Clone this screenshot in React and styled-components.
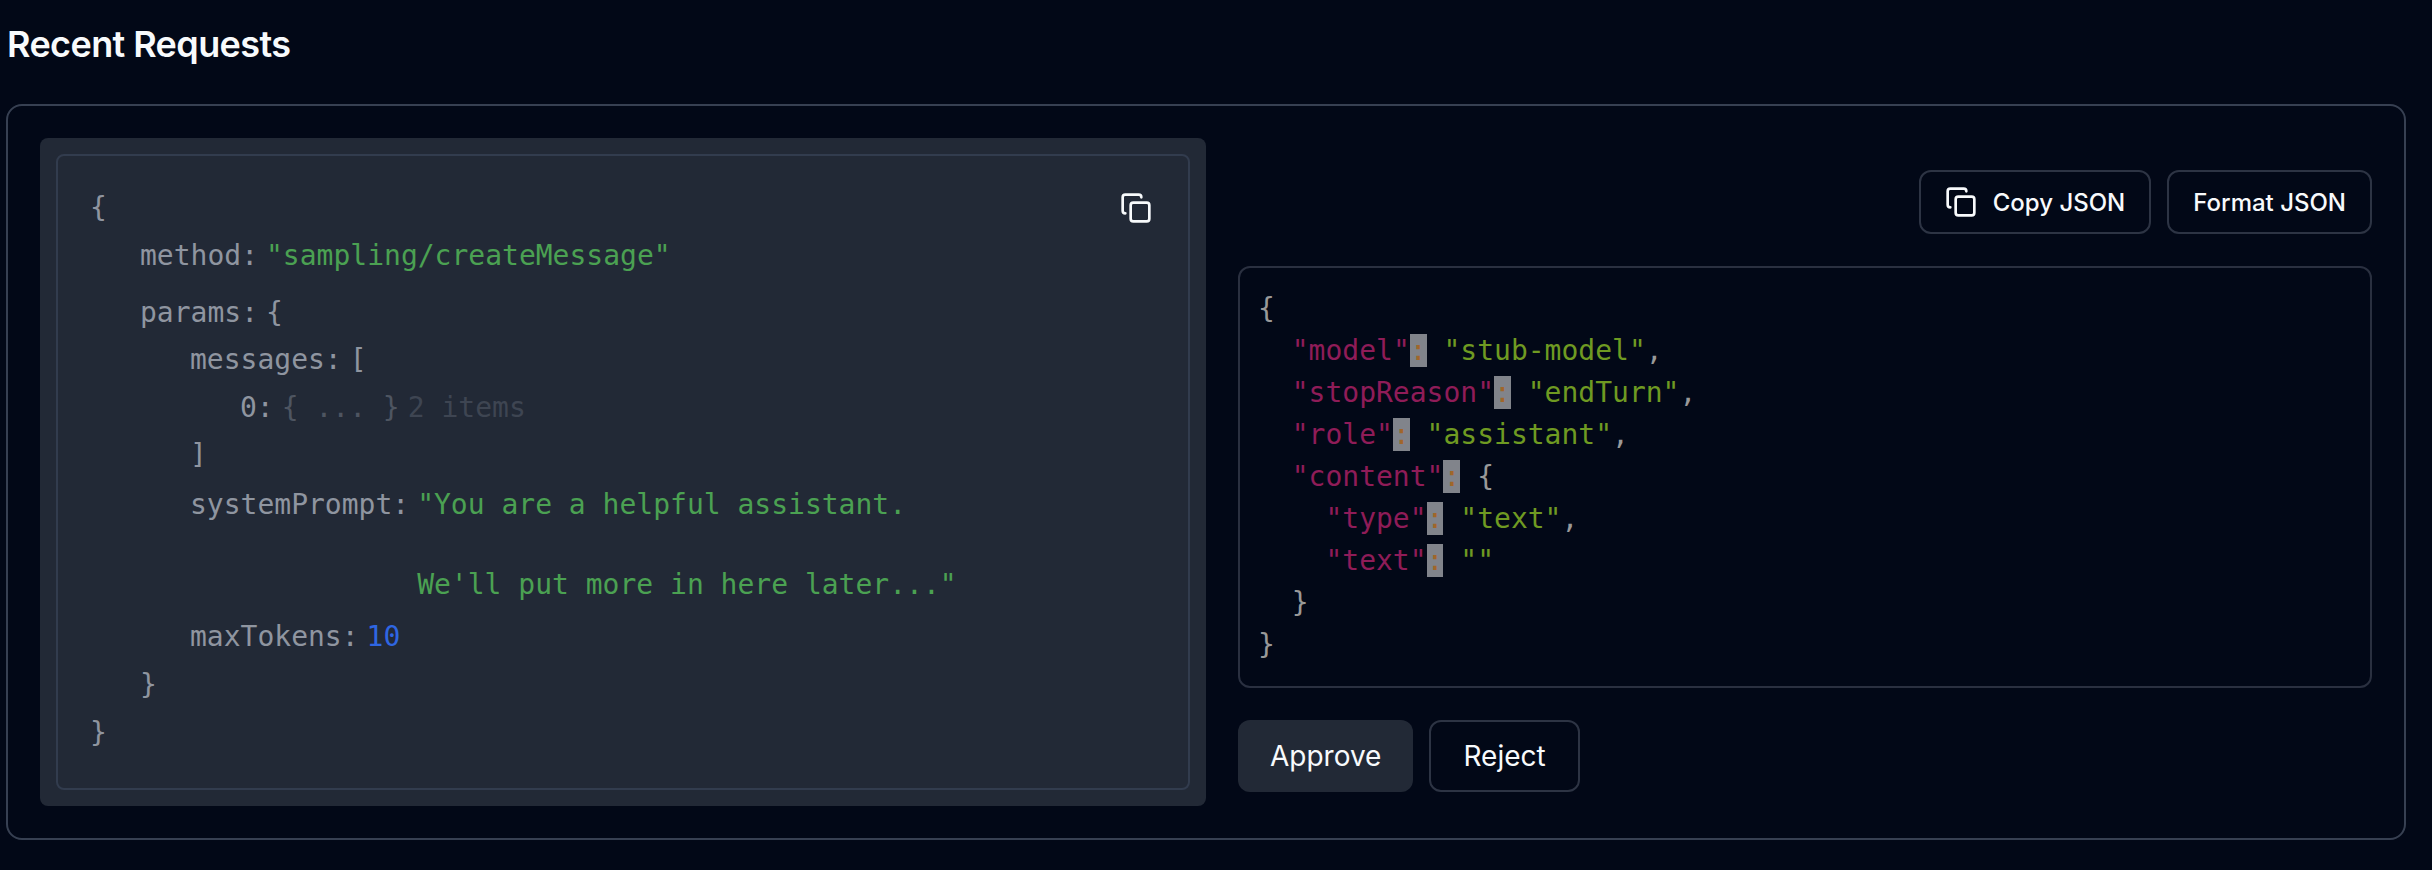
import React from "react";
import styled, { createGlobalStyle } from "styled-components";
import { Copy } from "lucide-react";

const Global = createGlobalStyle`
  html, body { margin: 0; padding: 0; background: #020817; }
  body { font-family: Inter, "Liberation Sans", sans-serif; color: #f8fafc; }
`;

const Page = styled.main`
  width: 2400px;
  height: 870px;
  margin-left: 6px;
  overflow: hidden;
`;

const Heading = styled.h2`
  margin: 0;
  padding: 22px 0 0 1px;
  height: 104px;
  box-sizing: border-box;
  font-size: 36px;
  line-height: 44px;
  font-weight: 600;
  letter-spacing: -0.6px;
  color: #f8fafc;
`;

const Card = styled.section`
  box-sizing: border-box;
  width: 2400px;
  height: 736px;
  padding: 32px;
  border: 2px solid #374052;
  border-radius: 16px;
  display: grid;
  grid-template-columns: 1166px 1134px;
  column-gap: 32px;
`;

const Panel = styled.div`
  padding: 16px;
  background: #222936;
  border-radius: 8px;
  display: flex;
`;

const CodeFrame = styled.div`
  position: relative;
  flex: 1;
  box-sizing: border-box;
  padding: 32px 32px;
  border: 2px solid #323c4e;
  border-radius: 8px;
  font-family: "DejaVu Sans Mono", monospace;
  font-size: 28px;
  line-height: 40px;
  color: #8f95a0;
`;

const CopyOverlay = styled.span`
  position: absolute;
  top: 36px;
  right: 36px;
  display: flex;
  color: #f8fafc;
`;

const Row = styled.div`
  display: flex;
  column-gap: 8px;
  margin-bottom: ${(p) => p.$after ?? 8}px;
  &:last-child { margin-bottom: 0; }
`;

const Nested = styled.div`
  padding-left: 50px;
  margin-bottom: ${(p) => p.$after ?? 8}px;
`;

const Str = styled.span`
  color: #4ba152;
  white-space: pre-wrap;
`;

const Num = styled.span`
  color: #2f66e2;
`;

const Dim = styled.span`
  color: ${(p) => (p.$faint ? "#3e4552" : "#4e5561")};
`;

const Side = styled.div`
  display: flex;
  flex-direction: column;
  align-items: stretch;
  padding-top: 32px;
`;

const Toolbar = styled.div`
  display: flex;
  justify-content: flex-end;
  gap: 16px;
  margin-bottom: 32px;
`;

const SmallButton = styled.button`
  box-sizing: border-box;
  height: 64px;
  padding: 0 24px;
  display: flex;
  align-items: center;
  gap: 16px;
  background: transparent;
  border: 2px solid #2d3444;
  border-radius: 12px;
  color: #f8fafc;
  font: 450 24px Inter, sans-serif;
`;

const Pre = styled.pre`
  box-sizing: border-box;
  margin: 0 0 32px;
  padding: 20px 18px;
  border: 2px solid #2a3040;
  border-radius: 12px;
  font-family: "DejaVu Sans Mono", monospace;
  font-size: 28px;
  line-height: 42px;
  color: #999;
`;

const Prop = styled.span`color: #8f1c58;`;
const JStr = styled.span`color: #6f9a22;`;
const Op = styled.span`
  color: #a0662a;
  background: hsla(0, 0%, 100%, 0.5);
`;

const Actions = styled.div`
  display: flex;
  gap: 16px;
`;

const Button = styled.button`
  box-sizing: border-box;
  height: 72px;
  padding: 0 32px;
  border-radius: 12px;
  border: ${(p) => (p.$primary ? "none" : "2px solid #2d3444")};
  background: ${(p) => (p.$primary ? "#222936" : "transparent")};
  color: #f8fafc;
  font: 400 28px Inter, sans-serif;
`;

const jsonLines = [
  ["model", "stub-model", ","],
  ["stopReason", "endTurn", ","],
  ["role", "assistant", ","],
];

export default function App() {
  return (
    <Page>
      <Global />
      <Heading>Recent Requests</Heading>
      <Card>
        <Panel>
          <CodeFrame>
            <CopyOverlay><Copy size={32} /></CopyOverlay>
            <Row>{"{"}</Row>
            <Nested>
              <Row $after={17}><span>method:</span><Str>"sampling/createMessage"</Str></Row>
              <Row $after={7}><span>params:</span><span>{"{"}</span></Row>
              <Nested>
                <Row><span>messages:</span><span>[</span></Row>
                <Nested $after={7}>
                  <Row><span>0:</span><Dim>{"{ ... }"}</Dim><Dim $faint>2 items</Dim></Row>
                </Nested>
                <Row $after={10}>]</Row>
                <Row $after={12}><span>systemPrompt:</span><Str>{"\"You are a helpful assistant.\n\nWe'll put more in here later...\""}</Str></Row>
                <Row $after={13}><span>maxTokens:</span><Num>10</Num></Row>
              </Nested>
              <Row>{"}"}</Row>
            </Nested>
            <Row>{"}"}</Row>
          </CodeFrame>
        </Panel>
        <Side>
          <Toolbar>
            <SmallButton><Copy size={32} />Copy JSON</SmallButton>
            <SmallButton>Format JSON</SmallButton>
          </Toolbar>
          <Pre>
            {"{\n"}
            {jsonLines.map(([k, v, c]) => (
              <React.Fragment key={k}>
                {"  "}<Prop>"{k}"</Prop><Op>:</Op>{" "}<JStr>"{v}"</JStr>{c}{"\n"}
              </React.Fragment>
            ))}
            {"  "}<Prop>"content"</Prop><Op>:</Op>{" {\n"}
            {"    "}<Prop>"type"</Prop><Op>:</Op>{" "}<JStr>"text"</JStr>{",\n"}
            {"    "}<Prop>"text"</Prop><Op>:</Op>{" "}<JStr>""</JStr>{"\n"}
            {"  }\n}"}
          </Pre>
          <Actions>
            <Button $primary>Approve</Button>
            <Button>Reject</Button>
          </Actions>
        </Side>
      </Card>
    </Page>
  );
}
